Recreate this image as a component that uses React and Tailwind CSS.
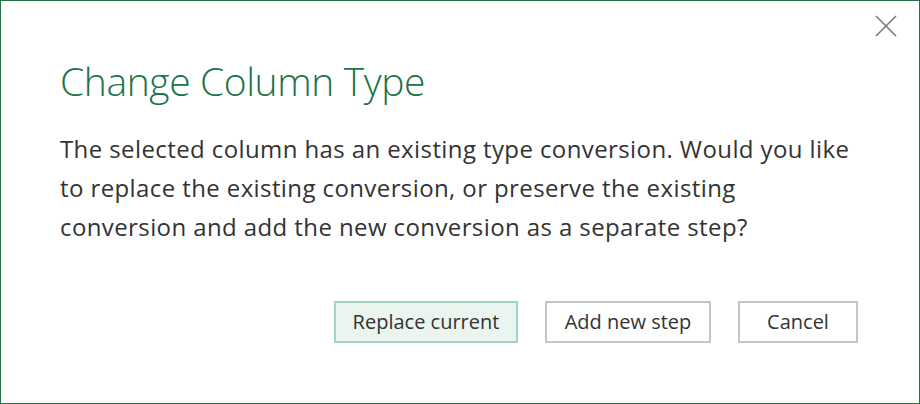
import React from "react";

const App = () => {
  return (
    <div className="w-[920px] h-[404px] bg-white border border-[#217346] flex flex-col relative" style={{ fontFamily: '"Open Sans", "Noto Sans", sans-serif' }}>
      <button className="absolute top-[14px] right-[22px] w-[22px] h-[22px] flex items-center justify-center">
        <svg width="22" height="22" viewBox="0 0 22 22">
          <path d="M1 1 L21 21 M21 1 L1 21" stroke="#7a7a7a" strokeWidth="1.6" fill="none" />
        </svg>
      </button>

      <h1 className="pl-[59px] pt-[56px] text-[39px] font-light text-[#217346] leading-[48px] tracking-[-0.4px]">
        Change Column Type
      </h1>

      <p className="pl-[59px] pt-[24px] text-[24px] leading-[39px] tracking-[0.4px] text-[#333333]">
        The selected column has an existing type conversion. Would you like
        <br />
        to replace the existing conversion, or preserve the existing
        <br />
        conversion and add the new conversion as a separate step?
      </p>

      <div className="flex justify-end gap-[27px] pr-[61px] pt-[55px]">
        <button className="w-[184px] h-[42px] border-2 border-[#9fd6b9] bg-[#e9f5ee] text-[20px] text-[#333333]">
          Replace current
        </button>
        <button className="w-[166px] h-[42px] border-2 border-[#c6c6c6] bg-white text-[20px] text-[#333333]">
          Add new step
        </button>
        <button className="w-[120px] h-[42px] border-2 border-[#c6c6c6] bg-white text-[20px] text-[#333333]">
          Cancel
        </button>
      </div>
    </div>
  );
};

export default App;
